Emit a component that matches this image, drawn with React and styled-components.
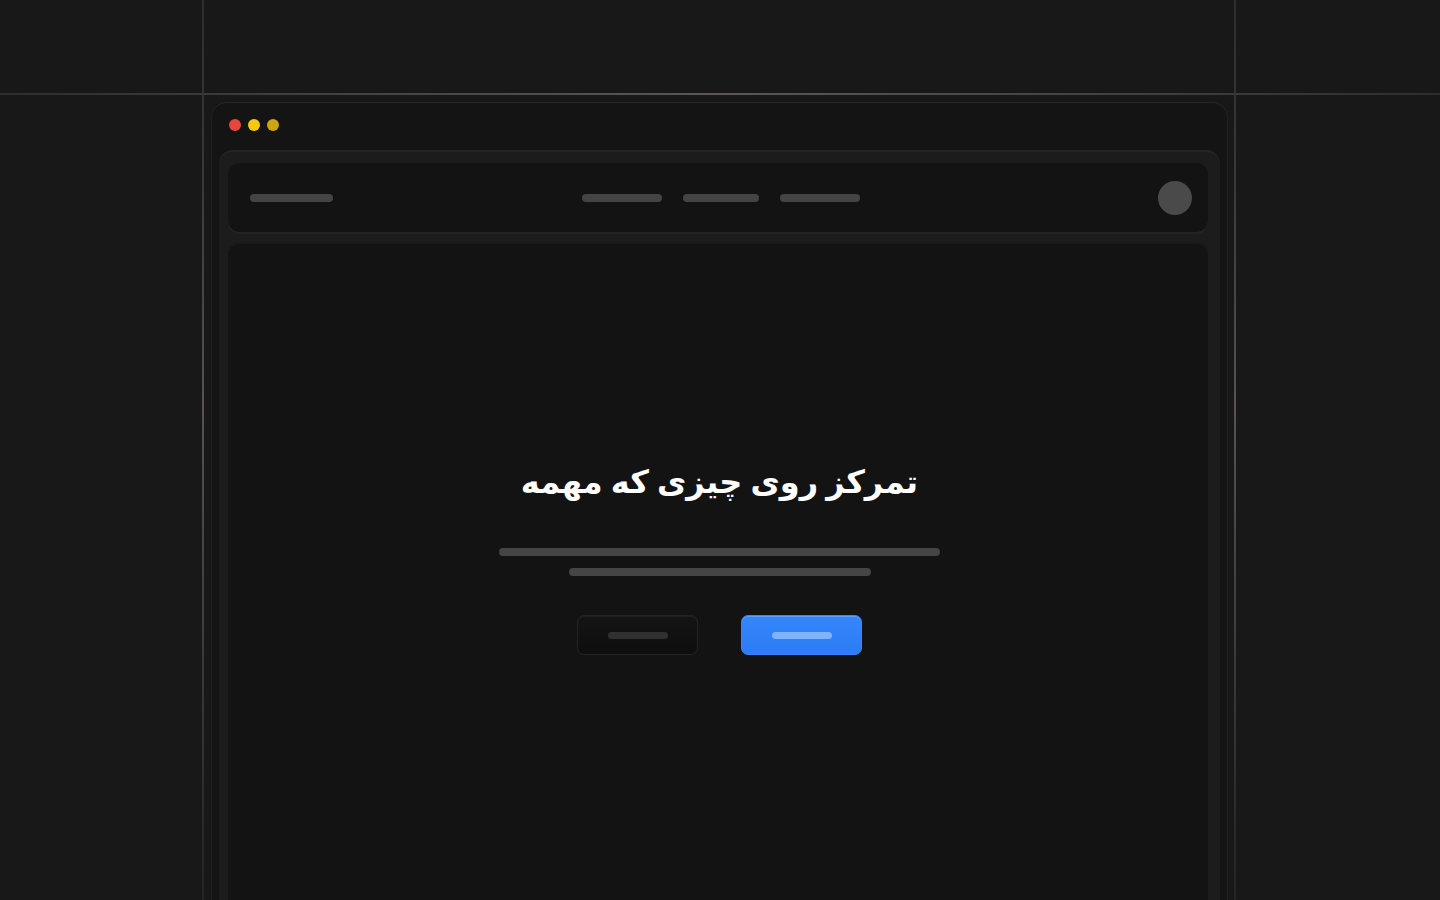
import React from "react";
import styled, { createGlobalStyle } from "styled-components";

const Global = createGlobalStyle`
  html, body { margin: 0; padding: 0; background: #181818; }
  body { font-family: "DejaVu Sans", "Noto Sans", sans-serif; overflow: hidden; }
`;

const Page = styled.div`
  position: relative;
  width: 1440px;
  height: 900px;
  overflow: hidden;
  background: #181818;
  padding-top: 102px;
  box-sizing: border-box;
`;

const VLine = styled.div`
  position: absolute;
  top: 0;
  bottom: 0;
  left: ${(p) => p.x}px;
  width: 2px;
  background: linear-gradient(
    to bottom,
    #2e2e2e 0%,
    #3a3838 20%,
    #5a5252 45%,
    #3a3838 75%,
    #242424 100%
  );
`;

const HLine = styled.div`
  position: absolute;
  left: 0;
  right: 0;
  top: 93px;
  height: 2px;
  background: linear-gradient(
    to right,
    #2e2e2e 0%,
    #3c3a3a 15%,
    #5e5656 50%,
    #3c3a3a 85%,
    #2e2e2e 100%
  );
`;

const Window = styled.div`
  position: relative;
  width: 1017px;
  margin-left: 211px;
  height: 830px;
  background: #141414;
  border-radius: 16px 16px 0 0;
  box-shadow: inset 0 1px 0 #262626, inset 1px 0 0 #1f1f1f, inset -1px 0 0 #1f1f1f;
  padding: 0 8px;
  box-sizing: border-box;
  display: flex;
  flex-direction: column;
`;

const TitleBar = styled.div`
  height: 48px;
  box-sizing: border-box;
  display: flex;
  align-items: flex-start;
  gap: 7px;
  padding: 17px 0 0 10px;
`;

const Dot = styled.span`
  width: 12px;
  height: 12px;
  border-radius: 50%;
  background: ${(p) => p.c};
`;

const Frame = styled.div`
  flex: 1;
  background: #1c1c1c;
  border-radius: 14px 14px 0 0;
  box-shadow: inset 0 2px 0 #242424;
  padding: 13px 12px 0 9px;
  display: flex;
  flex-direction: column;
  gap: 10px;
`;

const NavBar = styled.div`
  height: 69px;
  background: #131313;
  border-radius: 12px;
  box-shadow: 0 2px 0 #242424;
  display: grid;
  grid-template-columns: 1fr auto 1fr;
  align-items: center;
  padding: 0 16px 0 22px;
  box-sizing: border-box;
`;

const Pill = styled.span`
  display: block;
  width: ${(p) => p.w}px;
  height: ${(p) => p.h || 8}px;
  border-radius: 999px;
  background: ${(p) => p.c || "#444"};
`;

const NavCenter = styled.div`
  display: flex;
  justify-content: center;
  gap: 21px;
`;

const NavRight = styled.div`
  display: flex;
  justify-content: flex-end;
`;

const Avatar = styled.span`
  width: 34px;
  height: 34px;
  border-radius: 50%;
  background: #4a4a4a;
`;

const Main = styled.div`
  flex: 1;
  background: #131313;
  border-radius: 12px 12px 0 0;
  box-shadow: inset 0 2px 0 #1a1a1a;
  display: flex;
  flex-direction: column;
  align-items: center;
  padding-top: 214px;
  padding-left: 3px;
`;

const Heading = styled.h1`
  margin: 0;
  direction: rtl;
  font-family: "DejaVu Sans", sans-serif;
  font-weight: 700;
  font-size: 32px;
  word-spacing: -3px;
  line-height: 52px;
  color: #ffffff;
`;

const Lines = styled.div`
  margin-top: 40px;
  display: flex;
  flex-direction: column;
  align-items: center;
  gap: 12px;
`;

const Buttons = styled.div`
  margin-top: 39px;
  display: flex;
  gap: 43px;
`;

const Button = styled.div`
  width: 121px;
  height: 40px;
  border-radius: 7px;
  display: flex;
  align-items: center;
  justify-content: center;
  box-sizing: border-box;
  background: ${(p) =>
    p.primary
      ? "linear-gradient(to bottom, #3586fa, #2c7cf5)"
      : "linear-gradient(to bottom, #141414, #0e0e0e)"};
  border: 1px solid ${(p) => (p.primary ? "#3a86f8" : "#232323")};
  box-shadow: ${(p) =>
    p.primary
      ? "inset 0 1px 0 rgba(255,255,255,0.2)"
      : "inset 0 1px 0 rgba(255,255,255,0.06)"};
`;

export default function App() {
  return (
    <>
      <Global />
      <Page>
        <Window>
          <TitleBar>
            <Dot c="#e8453c" />
            <Dot c="#f6c90e" />
            <Dot c="#cca512" />
          </TitleBar>
          <Frame>
            <NavBar>
              <Pill w={83} />
              <NavCenter>
                <Pill w={80} />
                <Pill w={76} />
                <Pill w={80} />
              </NavCenter>
              <NavRight>
                <Avatar />
              </NavRight>
            </NavBar>
            <Main>
              <Heading>تمرکز روی چیزی که مهمه</Heading>
              <Lines>
                <Pill w={441} c="#454545" />
                <Pill w={302} c="#454545" />
              </Lines>
              <Buttons>
                <Button>
                  <Pill w={60} h={7} c="#303030" />
                </Button>
                <Button primary>
                  <Pill w={60} h={7} c="#7fb2ff" />
                </Button>
              </Buttons>
            </Main>
          </Frame>
        </Window>
        <HLine />
        <VLine x={202} />
        <VLine x={1234} />
      </Page>
    </>
  );
}
